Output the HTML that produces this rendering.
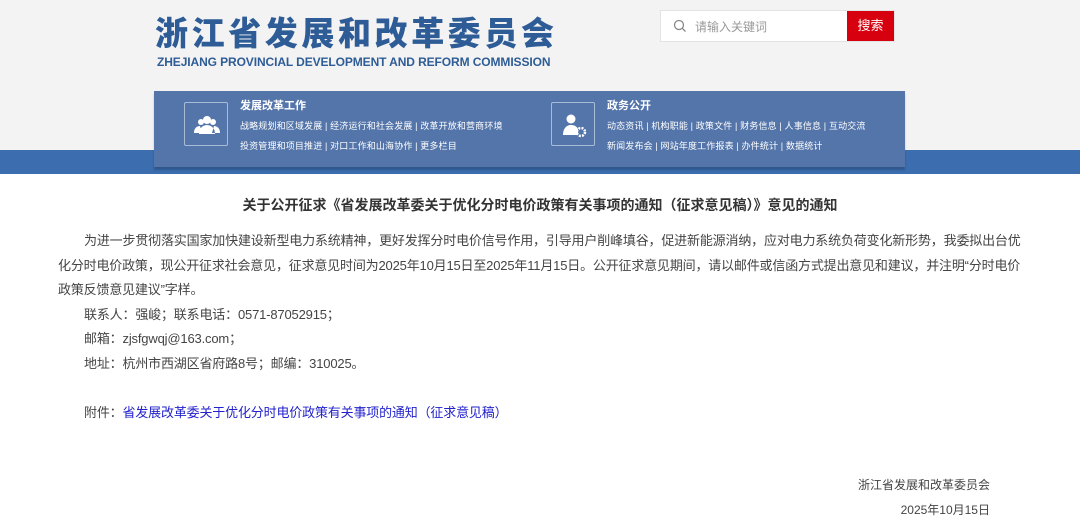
<!DOCTYPE html>
<html><head><meta charset="utf-8"><style>
*{margin:0;padding:0;box-sizing:border-box}
body{width:1080px;height:532px;overflow:hidden;background:#fff;font-family:"Liberation Sans","Noto Sans CJK SC",sans-serif;color:#333;position:relative}
.top{position:absolute;left:0;top:0;width:1080px;height:150px;background:#f3f3f3}
.band{position:absolute;left:0;top:150px;width:1080px;height:24px;background:#3b6daf}
.panel{position:absolute;left:154px;top:91px;width:751px;height:76px;background:#5475aa;box-shadow:0 3px 2px rgba(0,0,0,.2)}
.logo{position:absolute;left:155px;top:7px;font-size:33px;font-weight:900;color:#2e5c96;letter-spacing:3.6px;font-family:"Noto Sans CJK SC",sans-serif}
.en{position:absolute;left:157px;top:55px;font-size:12px;font-weight:bold;color:#2e5c96;letter-spacing:-.1px}
.search{position:absolute;left:660px;top:10px;width:235px;height:32px;background:#fff;border:1px solid #e3e3e3}
.search span{position:absolute;left:34px;top:7px;font-size:12px;color:#999}
.search b{position:absolute;right:0;top:0;width:47px;height:30px;background:#d7000f;color:#fff;font-weight:normal;font-size:13px;line-height:30px;text-align:center}
.ibox{position:absolute;width:44px;height:44px;border:1px solid #a8bcd8;border-radius:2px;top:11px}
.ph{position:absolute;color:#fff;font-size:11px;font-weight:bold}
.pl{position:absolute;color:#fff;font-size:9px;white-space:nowrap;letter-spacing:.15px}
h1{position:absolute;top:195px;left:0;width:1080px;text-align:center;font-size:14px;font-weight:bold;color:#333}
.body{position:absolute;left:58px;top:229px;width:1000px;font-size:13px;line-height:24.5px;color:#444;white-space:nowrap;letter-spacing:-.17px}
.body p{text-indent:26px}
.body a{color:#2222cc}
.sig{position:absolute;right:90px;font-size:12px;color:#444;text-align:right}
</style></head><body>
<div class="top"></div>
<div class="logo">浙江省发展和改革委员会</div>
<div class="en">ZHEJIANG PROVINCIAL DEVELOPMENT AND REFORM COMMISSION</div>
<div class="search"><svg style="position:absolute;left:12px;top:8px" width="14" height="14" viewBox="0 0 14 14"><circle cx="6" cy="6" r="4.5" fill="none" stroke="#888" stroke-width="1.3"/><path d="M9.3 9.3L12.5 12.5" stroke="#888" stroke-width="1.3"/></svg><span>请输入关键词</span><b>搜索</b></div>
<div class="band"></div>
<div class="panel">
<div class="ibox" style="left:30px"><svg width="44" height="44" viewBox="0 0 44 44"><circle cx="22" cy="17" r="4" fill="#fff"/><circle cx="16" cy="19" r="3" fill="#fff"/><circle cx="28" cy="19" r="3" fill="#fff"/><path d="M14 31c0-6 4-9 8-9s8 3 8 9z M9 30c0-5 3-7 6-7l2 7z M35 30c0-5-3-7-6-7l-2 7z" fill="#fff"/></svg></div>
<div class="ph" style="left:86px;top:6px">发展改革工作</div>
<div class="pl" style="left:86px;top:28px">战略规划和区域发展 | 经济运行和社会发展 | 改革开放和营商环境</div>
<div class="pl" style="left:86px;top:48px">投资管理和项目推进 | 对口工作和山海协作 | 更多栏目</div>
<div class="ibox" style="left:397px"><svg width="44" height="44" viewBox="0 0 44 44"><circle cx="19" cy="16" r="4.5" fill="#fff"/><path d="M11 32c0-7 4-10 8-10s6 2 7 4v6z" fill="#fff"/><circle cx="29" cy="29" r="4" fill="none" stroke="#fff" stroke-width="2.5" stroke-dasharray="2 1.2"/></svg></div>
<div class="ph" style="left:453px;top:6px">政务公开</div>
<div class="pl" style="left:453px;top:28px">动态资讯 | 机构职能 | 政策文件 | 财务信息 | 人事信息 | 互动交流</div>
<div class="pl" style="left:453px;top:48px">新闻发布会 | 网站年度工作报表 | 办件统计 | 数据统计</div>
</div>
<h1>关于公开征求《省发展改革委关于优化分时电价政策有关事项的通知（征求意见稿）》意见的通知</h1>
<div class="body">
<p>为进一步贯彻落实国家加快建设新型电力系统精神，更好发挥分时电价信号作用，引导用户削峰填谷，促进新能源消纳，应对电力系统负荷变化新形势，我委拟出台优</p>
<div style="letter-spacing:-.18px">化分时电价政策，现公开征求社会意见，征求意见时间为2025年10月15日至2025年11月15日。公开征求意见期间，请以邮件或信函方式提出意见和建议，并注明“分时电价</div>
<div>政策反馈意见建议”字样。</div>
<p>联系人：强峻；联系电话：0571-87052915；</p>
<p>邮箱：zjsfgwqj@163.com；</p>
<p>地址：杭州市西湖区省府路8号；邮编：310025。</p>
<p>&nbsp;</p>
<p>附件：<a>省发展改革委关于优化分时电价政策有关事项的通知（征求意见稿）</a></p>
</div>
<div class="sig" style="top:476px">浙江省发展和改革委员会</div>
<div class="sig" style="top:501px">2025年10月15日</div>
</body></html>
